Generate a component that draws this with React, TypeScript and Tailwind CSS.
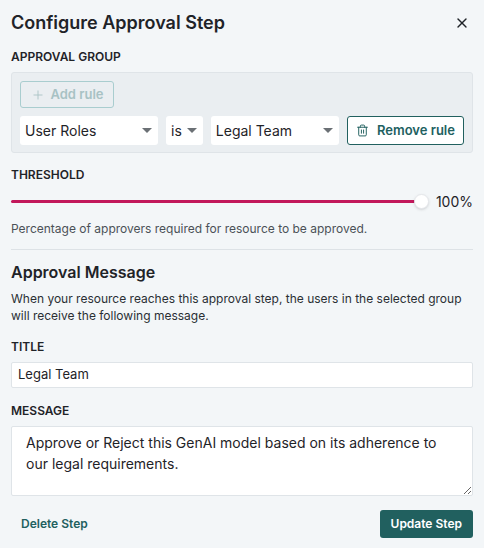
import { Plus, Trash2, X } from "lucide-react"

function Select({ label, className }: { label: string; className: string }) {
  return (
    <div className={`flex h-[29px] items-center justify-between rounded-[3px] bg-white pl-[5px] pr-[6px] text-[14px] text-[#1f2328] ${className}`}>
      <span>{label}</span>
      <svg width="10" height="5" viewBox="0 0 10 5"><path d="M0 0h10L5 5z" fill="#6b7075" /></svg>
    </div>
  )
}

export default function App() {
  return (
    <div className="h-[548px] w-[484px] bg-[#f3f6f8] px-[11px] pt-[11px] text-[#1f2328]" style={{ fontFamily: "Inter, 'Noto Sans', sans-serif" }}>
      <div className="flex items-center justify-between">
        <h2 className="text-[18px] font-semibold leading-[24px]">Configure Approval Step</h2>
        <X className="mr-[3px] h-[16px] w-[16px] text-[#1f2328]" strokeWidth={2} />
      </div>

      <div className="mt-[14px] text-[12px] font-semibold leading-[16px]">APPROVAL GROUP</div>
      <div className="mt-[7px] rounded-[3px] border border-[#dfe4e8] bg-[#eaeef1] px-[8px] pb-[7px] pt-[8px]">
        <button className="flex h-[27px] w-[94px] items-center justify-center gap-[6px] rounded-[3px] border border-[#a9cdcf] text-[13px] font-semibold text-[#a8c2c4]">
          <Plus className="h-[14px] w-[14px]" strokeWidth={1.5} /> Add rule
        </button>
        <div className="mt-[8px] flex items-center gap-[8px]">
          <Select label="User Roles" className="w-[139px]" />
          <Select label="is" className="w-[37px]" />
          <Select label="Legal Team" className="w-[129px]" />
          <button className="flex h-[29px] w-[118px] items-center justify-center gap-[8px] rounded-[3px] border border-[#21605f] bg-white text-[13px] font-semibold text-[#21605f]">
            <Trash2 className="h-[13px] w-[13px]" strokeWidth={1.8} /> Remove rule
          </button>
        </div>
      </div>

      <div className="mt-[14px] text-[12px] font-semibold leading-[16px]">THRESHOLD</div>
      <div className="mt-[8px] flex items-center">
        <div className="relative h-[3px] flex-1 rounded-full bg-[#c2185b]">
          <div className="absolute right-[-7px] top-[-6px] h-[15px] w-[15px] rounded-full border border-[#e5e7eb] bg-white shadow-sm" />
        </div>
        <span className="ml-[14px] text-[14px]">100%</span>
      </div>
      <p className="mt-[8px] text-[12px] text-[#4b5157]">Percentage of approvers required for resource to be approved.</p>
      <div className="mt-[11px] border-t border-[#dde2e6]" />

      <h3 className="mt-[11px] text-[16px] font-semibold leading-[22px]">Approval Message</h3>
      <p className="mt-[7px] text-[12px] leading-[17px] text-[#2a2f34]">
        When your resource reaches this approval step, the users in the selected group will receive the following message.
      </p>

      <div className="mt-[15px] text-[12px] font-semibold leading-[16px]">TITLE</div>
      <div className="mt-[7px] flex h-[26px] items-center rounded-[2px] border border-[#dfe4e8] bg-white px-[6px] text-[13px]">Legal Team</div>

      <div className="mt-[15px] text-[12px] font-semibold leading-[16px]">MESSAGE</div>
      <textarea
        className="mt-[7px] block h-[70px] w-full resize-y rounded-[2px] border border-[#dfe4e8] bg-white px-[14px] py-[5px] text-[14px] leading-[21px] text-[#1f2328] outline-none"
        defaultValue="Approve or Reject this GenAI model based on its adherence to our legal requirements."
      />

      <div className="mt-[14px] flex items-center justify-between">
        <button className="px-[10px] text-[12px] font-semibold text-[#21605f]">Delete Step</button>
        <button className="h-[28px] rounded-[3px] bg-[#21605f] px-[11px] text-[12px] font-semibold text-white">Update Step</button>
      </div>
    </div>
  )
}
